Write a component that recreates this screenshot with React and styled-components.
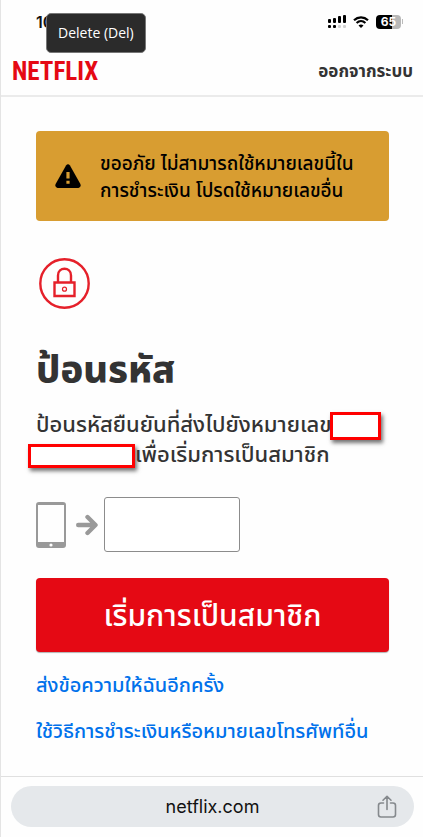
import React from 'react';
import styled, { createGlobalStyle } from 'styled-components'

const GlobalStyle = createGlobalStyle`
  *, *::before, *::after {
    box-sizing: border-box;
  }

  body {
    margin: 0;
    background: #fefefe;
    color: #333;
    font-family: "Noto Sans Thai", Inter, "Noto Sans", sans-serif;
  }
`

const Page = styled.div`
  display: flex;
  flex-direction: column;
  min-height: 100vh;
  border-left: 1px solid #e4e4e4;
`

const StatusBar = styled.div`
  position: relative;
  display: flex;
  align-items: center;
  justify-content: space-between;
  height: 43px;
  padding: 0 20px 0 35px;
`

const Clock = styled.span`
  color: #111;
  font: 600 16px/20px Inter, sans-serif;
`

const StatusIcons = styled.div`
  display: flex;
  align-items: center;
  gap: 7px;
`

const Battery = styled.div`
  display: flex;
  align-items: center;
  gap: 1px;

  &::after {
    content: "";
    width: 1px;
    height: 5px;
    background: #bbb;
  }
`

const BatteryLevel = styled.span`
  width: 25px;
  height: 14px;
  border-radius: 4px;
  background: linear-gradient(90deg, #000 65%, #b8b8b8 65%);
  color: #fff;
  font: 700 12px/14px Inter, sans-serif;
  text-align: center;
`

const Tooltip = styled.div`
  position: absolute;
  top: 13px;
  left: 45px;
  padding: 8px 11px;
  border: 1px solid #777;
  border-radius: 5px;
  background: #2b2b2b;
  color: #fff;
  font: 14px/22px "Open Sans", sans-serif;
  white-space: nowrap;
`

const Header = styled.header`
  display: flex;
  align-items: center;
  justify-content: space-between;
  height: 54px;
  padding: 6px 10px 0 11px;
  border-bottom: 2px solid #ebebeb;
`

const Logo = styled.a`
  color: #e50914;
  font: 700 25px/32px "Liberation Sans Narrow", "Roboto Condensed", "DejaVu Sans Condensed", sans-serif;
  text-decoration: none;
`

const SignOut = styled.a`
  color: #333;
  font-size: 17px;
  font-weight: 700;
  line-height: 24px;
  text-decoration: none;
  white-space: nowrap;
`

const Main = styled.main`
  flex: 1;
  padding: 34px 34px 10px 35px;
`

const Alert = styled.div`
  display: flex;
  align-items: center;
  gap: 18px;
  min-height: 90px;
  padding: 16px 18px;
  border-radius: 4px;
  background: #d89d31;
  color: #000;
  font-size: 19px;
  font-weight: 500;
  line-height: 27px;

  svg {
    flex: none;
  }
`

const AlertText = styled.div`
  padding-top: 4px;
`

const LockIcon = styled.svg`
  display: block;
  margin: 37px 0 0 3px;
`

const Title = styled.h1`
  margin: 34px 0 12px;
  font-size: 38px;
  font-weight: 800;
  line-height: 56px;
`

const Message = styled.p`
  margin: 0;
  font-size: 22px;
  font-weight: 500;
  line-height: 30px;
  white-space: nowrap;
`

const Redacted = styled.span`
  display: inline-block;
  width: ${props => props.$wide ? '107px' : '51px'};
  height: ${props => props.$wide ? '24px' : '28px'};
  margin-left: ${props => props.$wide ? '-8px' : '-2px'};
  border: 3px solid #f00;
  background: #fff;
  box-shadow: 2px 3px 4px rgba(0, 0, 0, 0.55);
  vertical-align: middle;
`

const CodeRow = styled.div`
  display: flex;
  align-items: center;
  margin-top: 26px;
`

const ArrowIcon = styled.svg`
  margin: 0 6px 0 10px;
`

const CodeInput = styled.input`
  width: 136px;
  height: 55px;
  padding: 0 12px;
  border: 1px solid #8c8c8c;
  border-radius: 3px;
  background: #fff;
  font-size: 20px;
`

const SubmitButton = styled.button`
  display: block;
  width: 100%;
  height: 74px;
  margin: 26px 0 18px;
  padding: 4px 0 0;
  border: 0;
  border-radius: 4px;
  background: #e50914;
  box-shadow: 0 1px 1px rgba(0, 0, 0, 0.3);
  color: #fff;
  font-family: inherit;
  font-size: 30px;
  font-weight: 500;
`

const TextLink = styled.a`
  display: block;
  margin-bottom: 14px;
  color: #0071eb;
  font-size: 20px;
  font-weight: 500;
  line-height: 32px;
  text-decoration: none;
  white-space: nowrap;
`

const BrowserBar = styled.footer`
  padding: 9px 9px 10px 10px;
  border-top: 1px solid #e0e0e0;
`

const AddressBar = styled.div`
  display: grid;
  grid-template-columns: 1fr auto 1fr;
  align-items: center;
  height: 41px;
  padding: 0 17px;
  border-radius: 21px;
  background: #e5e8eb;
`

const Address = styled.span`
  grid-column: 2;
  color: #111;
  font: 18px/24px Inter, sans-serif;
`

const ShareButton = styled.button`
  justify-self: end;
  display: flex;
  padding: 0;
  border: 0;
  background: none;
`

const SignalGlyph = () => (
  <svg width="18" height="13" viewBox="0 0 18 13">
    <rect x="0" y="4" width="3" height="4" rx="1" />
    <rect x="5" y="3" width="3" height="5" rx="1" />
    <rect x="10" y="1" width="3" height="7" rx="1" />
    <rect x="15" y="0" width="3" height="8" rx="1" />
    <rect x="0" y="10" width="3" height="3" rx="1" />
    <rect x="5" y="10" width="3" height="3" rx="1" />
    <rect x="10" y="10" width="3" height="3" rx="1" fill="#d0d0d0" />
    <rect x="15" y="10" width="3" height="3" rx="1" fill="#d0d0d0" />
  </svg>
)

const WifiGlyph = () => (
  <svg width="16" height="12" viewBox="0 0 16 12">
    <path d="M1 4.2C5 .4 11 .4 15 4.2M3.6 7C6.2 4.6 9.8 4.6 12.4 7" fill="none" stroke="#000" strokeWidth="2.2" />
    <path d="M8 12 5.5 9.4C7 8.2 9 8.2 10.5 9.4Z" />
  </svg>
)

const WarningGlyph = () => (
  <svg width="28" height="24" viewBox="0 0 28 24">
    <path d="M12 1.5Q14 -.8 16 1.5L26.4 20Q27.4 23.5 24.5 24H3.5Q.6 23.5 1.6 20Z" />
    <path d="M12.4 8h3.2v6.5h-3.2zM12.4 16.7h3.2v3h-3.2z" fill="#d89d31" />
  </svg>
)

const PhoneGlyph = () => (
  <svg width="30" height="46" viewBox="0 0 30 46">
    <path d="M3 0H27Q30 0 30 3V43Q30 46 27 46H3Q0 46 0 43V3Q0 0 3 0ZM2 3V40H28V3Z" fill="#999" fillRule="evenodd" />
    <circle cx="15" cy="43" r="1.6" fill="#fff" />
  </svg>
)

const ShareGlyph = () => (
  <svg width="20" height="23" viewBox="0 0 20 23" fill="none" stroke="#85898d" strokeWidth="1.6" strokeLinecap="round" strokeLinejoin="round">
    <path d="M6.5 8H4Q1.5 8 1.5 10.5V19.5Q1.5 22 4 22H16Q18.5 22 18.5 19.5V10.5Q18.5 8 16 8H13.5M10 14.5V1.5M6 5.2 10 1.3 14 5.2" />
  </svg>
)

const App = () => (
  <Page>
    <GlobalStyle />
    <StatusBar>
      <Clock>10</Clock>
      <StatusIcons>
        <SignalGlyph />
        <WifiGlyph />
        <Battery><BatteryLevel>65</BatteryLevel></Battery>
      </StatusIcons>
      <Tooltip role="tooltip">Delete (Del)</Tooltip>
    </StatusBar>

    <Header>
      <Logo href="#home">NETFLIX</Logo>
      <SignOut href="#signout">ออกจากระบบ</SignOut>
    </Header>

    <Main>
      <Alert role="alert">
        <WarningGlyph />
        <AlertText>
          ขออภัย ไม่สามารถใช้หมายเลขนี้ใน<br />
          การชำระเงิน โปรดใช้หมายเลขอื่น
        </AlertText>
      </Alert>

      <LockIcon width="51" height="51" viewBox="0 0 51 51" fill="none" stroke="#e5202a" strokeWidth="2.4">
        <circle cx="25.5" cy="25.5" r="24.2" />
        <path d="M15.5 24.5H35.5V38H15.5ZM19 24V17.5C19 8.5 32 8.5 32 17.5V24" />
        <circle cx="25.5" cy="31.2" r="2" strokeWidth="1.2" />
      </LockIcon>

      <Title>ป้อนรหัส</Title>
      <Message>
        ป้อนรหัสยืนยันที่ส่งไปยังหมายเลข<Redacted /><br />
        <Redacted $wide />เพื่อเริ่มการเป็นสมาชิก
      </Message>

      <CodeRow>
        <PhoneGlyph />
        <ArrowIcon width="22" height="22" viewBox="0 0 22 22" fill="none" stroke="#999" strokeWidth="4.4" strokeLinecap="round" strokeLinejoin="round">
          <path d="M2.2 11H19M11.5 3 19.5 11 11.5 19" />
        </ArrowIcon>
        <CodeInput type="text" inputMode="numeric" aria-label="ป้อนรหัส" />
      </CodeRow>

      <SubmitButton type="button">เริ่มการเป็นสมาชิก</SubmitButton>
      <TextLink href="#resend">ส่งข้อความให้ฉันอีกครั้ง</TextLink>
      <TextLink href="#payment">ใช้วิธีการชำระเงินหรือหมายเลขโทรศัพท์อื่น</TextLink>
    </Main>

    <BrowserBar>
      <AddressBar>
        <Address>netflix.com</Address>
        <ShareButton type="button" aria-label="Share"><ShareGlyph /></ShareButton>
      </AddressBar>
    </BrowserBar>
  </Page>
)

export default App
